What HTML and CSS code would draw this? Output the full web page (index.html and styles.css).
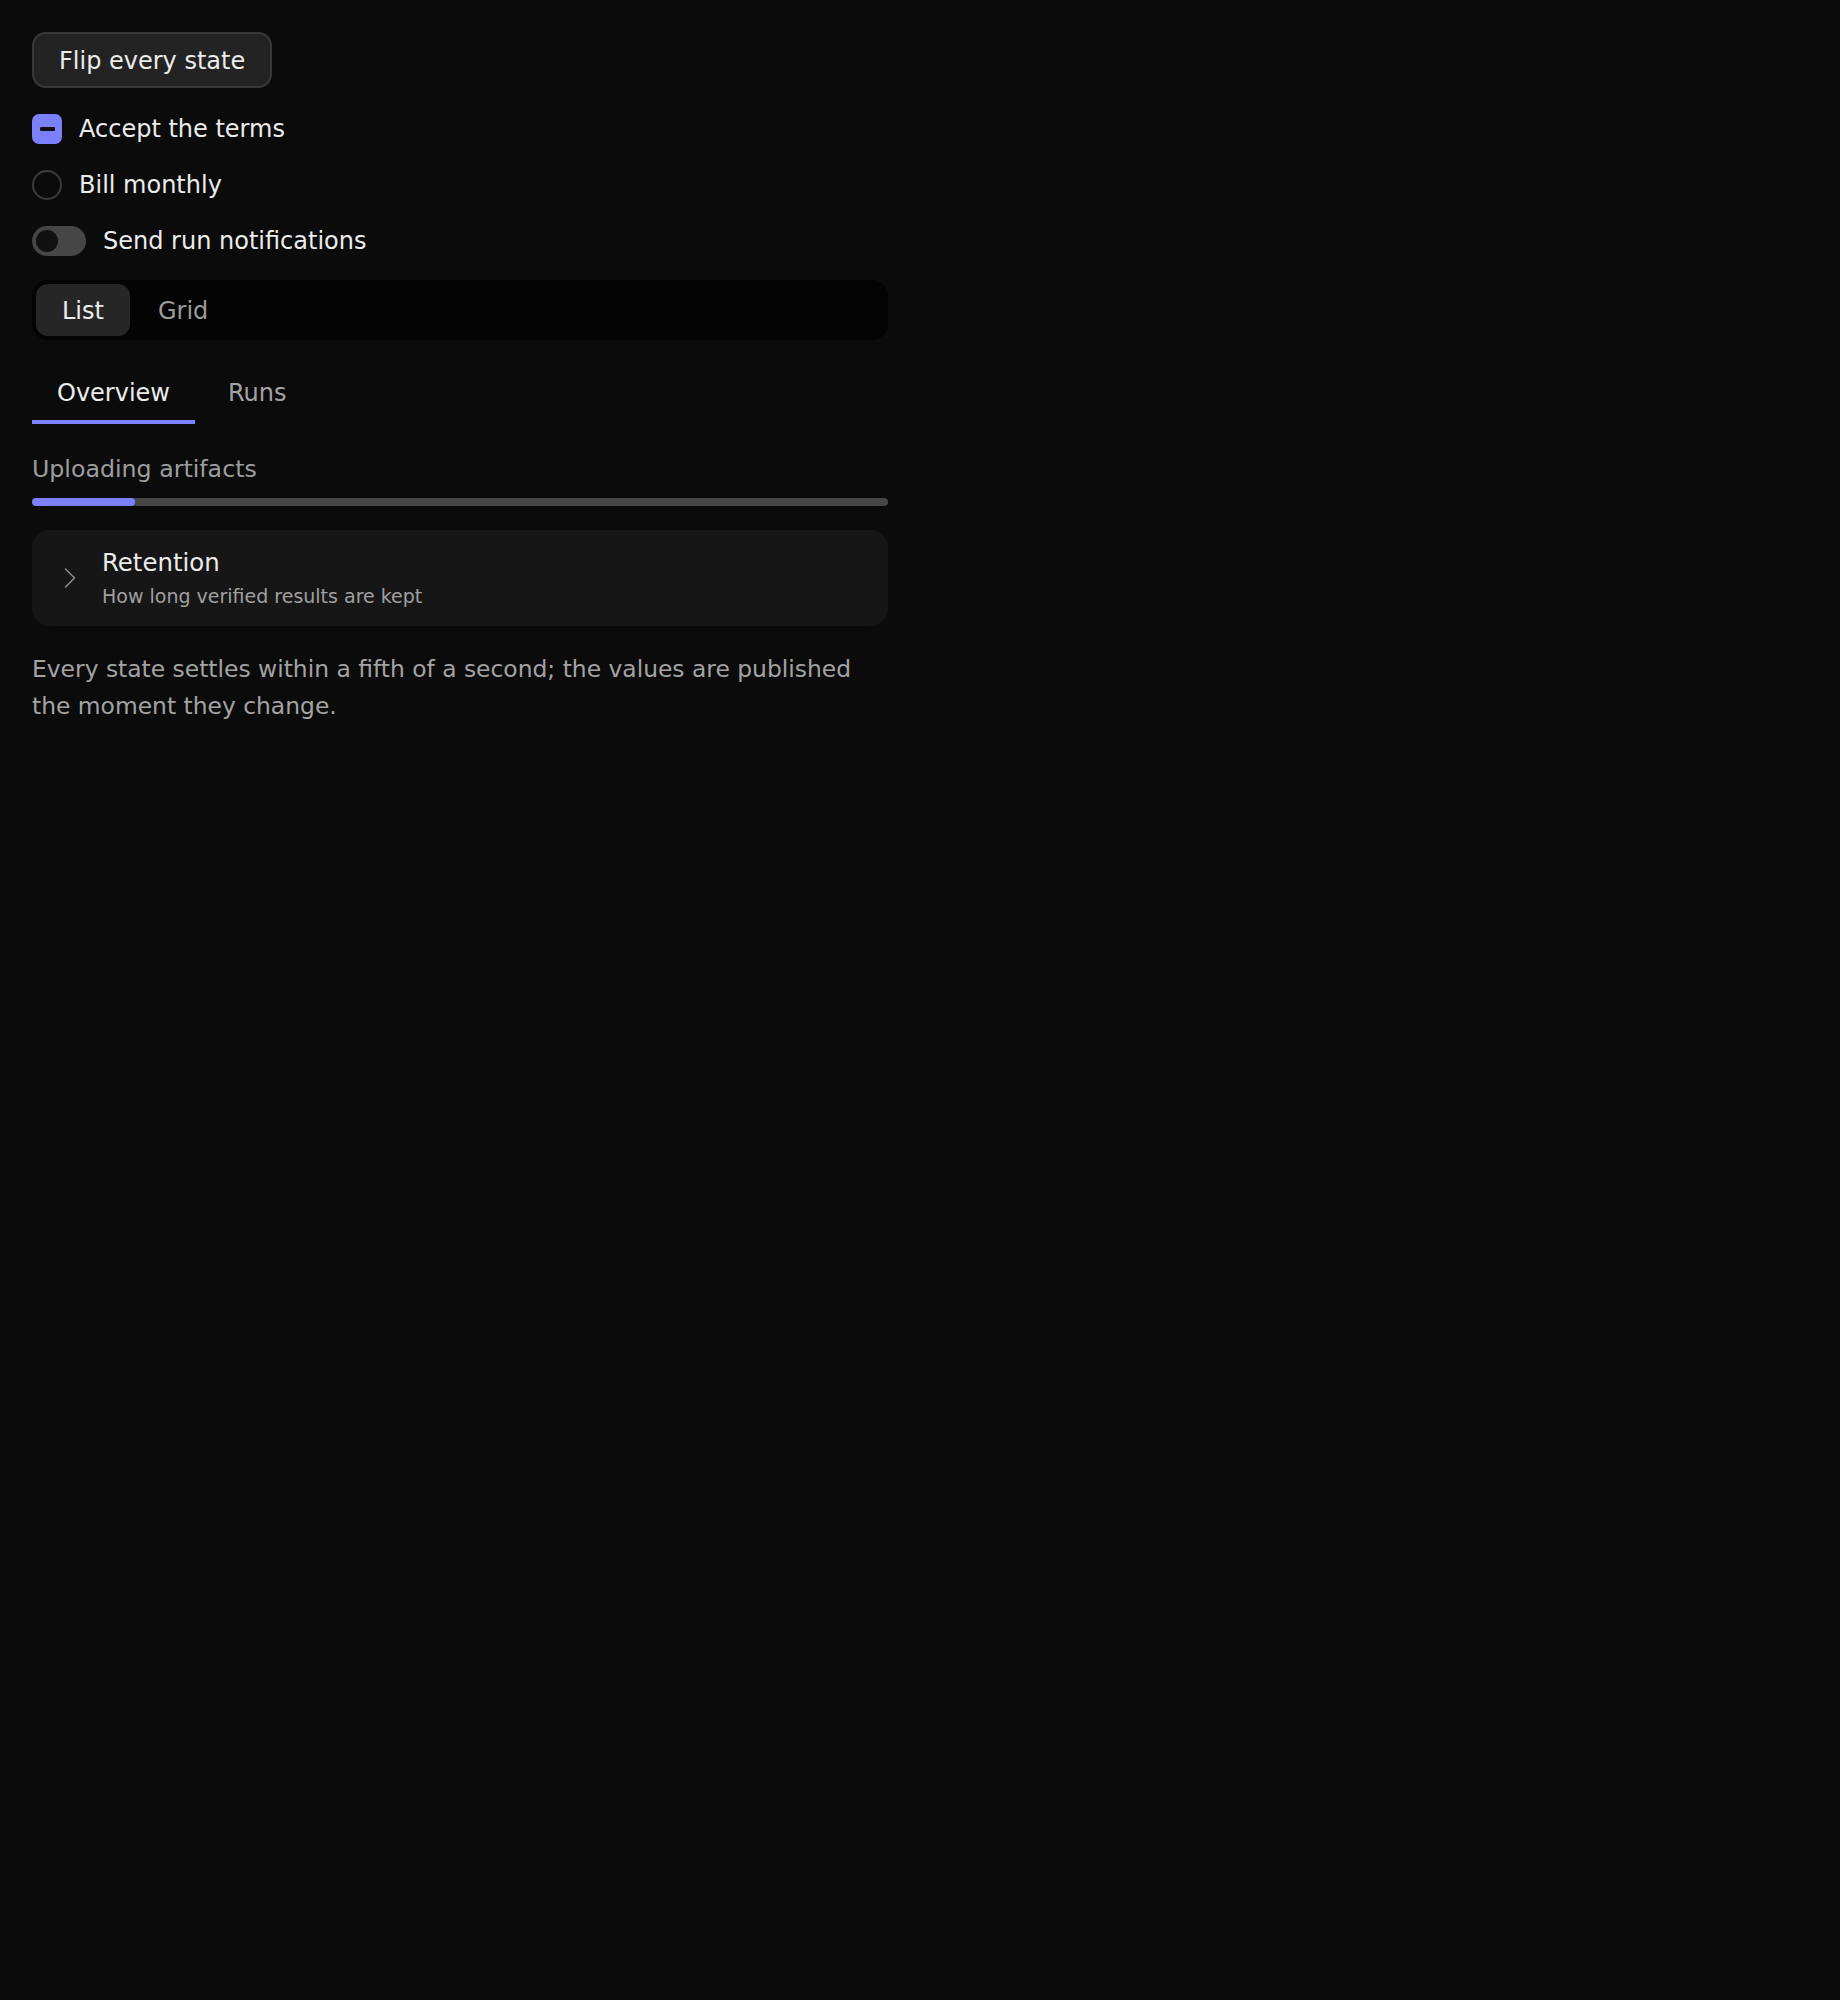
FILE: index.html
```html
<!DOCTYPE html>
<html lang="en">
<head>
<meta charset="utf-8">
<title>States</title>
<link rel="stylesheet" href="styles.css">
</head>
<body>
<main class="page">
  <div class="actions">
    <button class="btn" type="button">Flip every state</button>
  </div>

  <label class="row">
    <span class="checkbox"><span class="checkbox-bar"></span></span>
    <span class="row-label">Accept the terms</span>
  </label>

  <label class="row">
    <span class="radio"></span>
    <span class="row-label">Bill monthly</span>
  </label>

  <label class="row">
    <span class="switch"><span class="switch-knob"></span></span>
    <span class="row-label">Send run notifications</span>
  </label>

  <div class="segmented">
    <button class="segment segment-active" type="button">List</button>
    <button class="segment" type="button">Grid</button>
  </div>

  <div class="tabs">
    <button class="tab tab-active" type="button">Overview</button>
    <button class="tab" type="button">Runs</button>
  </div>

  <div class="progress">
    <div class="progress-label">Uploading artifacts</div>
    <div class="progress-track"><div class="progress-fill" style="width: 12%"></div></div>
  </div>

  <div class="disclosure">
    <svg class="chevron" width="36" height="36" viewBox="0 0 36 36" aria-hidden="true">
      <path d="M13.5 9 L22.5 18 L13.5 27" fill="none" stroke="currentColor" stroke-width="1.5" stroke-linecap="round" stroke-linejoin="round"/>
    </svg>
    <div class="disclosure-text">
      <div class="disclosure-title">Retention</div>
      <div class="disclosure-sub">How long verified results are kept</div>
    </div>
  </div>

  <p class="note">Every state settles within a fifth of a second; the values are published the moment they change.</p>
</main>
</body>
</html>
```

FILE: styles.css
```css
html, body {
  margin: 0;
  padding: 0;
  background: #0b0b0b;
}

body {
  font-family: "DejaVu Sans", sans-serif;
  font-size: 24px;
  line-height: 36px;
  color: #ececec;
}

.page {
  width: 856px;
  padding: 32px;
  display: flex;
  flex-direction: column;
  gap: 20px;
}

.actions {
  display: flex;
  margin-bottom: 3px;
}

.btn {
  font: inherit;
  color: #ececec;
  background: #232323;
  border: 2px solid #393939;
  border-radius: 14px;
  height: 56px;
  padding: 1px 25px 0;
  cursor: pointer;
}

.row {
  display: flex;
  align-items: center;
  gap: 17px;
  height: 36px;
}

.checkbox {
  width: 30px;
  height: 30px;
  border-radius: 7px;
  background: #7b80fb;
  display: flex;
  align-items: center;
  justify-content: center;
}

.checkbox-bar {
  width: 15px;
  height: 4px;
  border-radius: 1px;
  background: #101010;
}

.radio {
  width: 30px;
  height: 30px;
  box-sizing: border-box;
  border: 2px solid #3c3c3c;
  border-radius: 50%;
}

.switch {
  width: 54px;
  height: 30px;
  border-radius: 15px;
  background: #464646;
  display: flex;
  align-items: center;
  padding: 0 4px;
  box-sizing: border-box;
}

.switch-knob {
  width: 22px;
  height: 22px;
  border-radius: 50%;
  background: #111111;
}

.segmented {
  margin-top: 1px;
  height: 60px;
  box-sizing: border-box;
  padding: 4px;
  background: #040404;
  border-radius: 16px;
  display: flex;
  gap: 2px;
}

.segment {
  font: inherit;
  height: 52px;
  padding: 1px 26px 0;
  border: 0;
  border-radius: 12px;
  background: transparent;
  color: #9c9c9c;
  cursor: pointer;
}

.segment-active {
  background: #262626;
  color: #ececec;
}

.tabs {
  display: flex;
  gap: 8px;
}

.tab {
  font: inherit;
  background: transparent;
  border: 0;
  border-bottom: 4px solid transparent;
  padding: 15px 25px 9px;
  color: #a3a3a3;
  cursor: pointer;
}

.tab-active {
  color: #ececec;
  border-bottom-color: #7b80fb;
}

.progress {
  margin-top: 7px;
  display: flex;
  flex-direction: column;
  gap: 11px;
}

.progress-label {
  color: #9e9e9e;
  font-size: 23.7px;
}

.progress-track {
  height: 8px;
  border-radius: 4px;
  background: #464646;
  overflow: hidden;
}

.progress-fill {
  height: 100%;
  border-radius: 4px;
  background: #7b80fb;
}

.disclosure {
  margin-top: 4px;
  display: flex;
  align-items: center;
  gap: 14px;
  padding: 15px 20px;
  background: #161616;
  border-radius: 18px;
}

.chevron {
  color: #8e8e8e;
  flex: none;
}

.disclosure-title {
  color: #ececec;
  font-size: 24.4px;
}

.disclosure-sub {
  font-size: 19px;
  line-height: 30px;
  color: #a0a0a0;
}

.note {
  margin: 5px 0 0;
  font-size: 23.4px;
  line-height: 37px;
  color: #a3a3a3;
}
```
